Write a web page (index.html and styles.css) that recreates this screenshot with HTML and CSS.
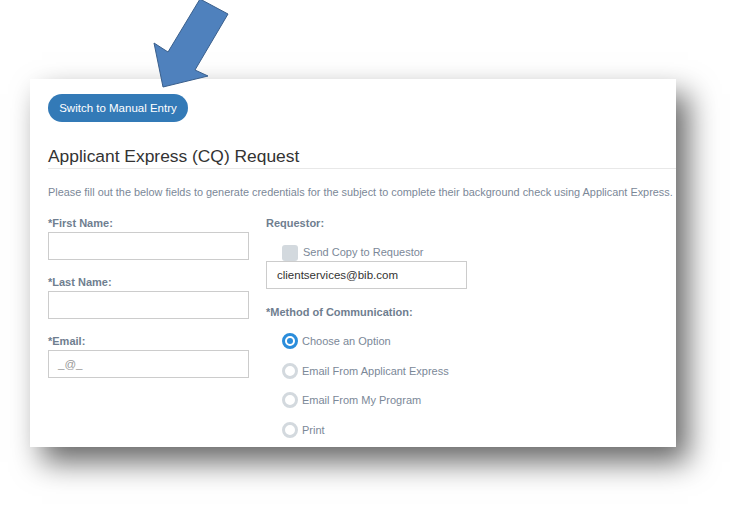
FILE: index.html
```html
<!DOCTYPE html>
<html>
<head>
<meta charset="utf-8">
<link rel="stylesheet" href="styles.css">
</head>
<body>
<div class="stage">
  <div class="panel">
    <button class="btn-manual">Switch to Manual Entry</button>
    <h1 class="title">Applicant Express (CQ) Request</h1>
    <p class="desc">Please fill out the below fields to generate credentials for the subject to complete their background check using Applicant Express.</p>
    <div class="cols">
      <div class="col col-left">
        <div class="label">*First Name:</div>
        <div class="input"></div>
        <div class="label gap">*Last Name:</div>
        <div class="input"></div>
        <div class="label gap">*Email:</div>
        <div class="input"><span class="placeholder">_@_</span></div>
      </div>
      <div class="col col-right">
        <div class="label">Requestor:</div>
        <div class="check-row"><span class="checkbox"></span><span class="opt-text">Send Copy to Requestor</span></div>
        <div class="input"><span class="value">clientservices@bib.com</span></div>
        <div class="label method">*Method of Communication:</div>
        <div class="radios">
          <div class="radio-row"><span class="radio on"></span><span class="opt-text">Choose an Option</span></div>
          <div class="radio-row"><span class="radio"></span><span class="opt-text">Email From Applicant Express</span></div>
          <div class="radio-row"><span class="radio"></span><span class="opt-text">Email From My Program</span></div>
          <div class="radio-row"><span class="radio"></span><span class="opt-text">Print</span></div>
        </div>
      </div>
    </div>
  </div>
</div>
<svg class="arrow" width="737" height="100" viewBox="0 0 737 100">
  <polygon points="200,-1 228,14 195,70 208,76 163,87 154,43 168,52" fill="#4f81bd" stroke="#3a5f8c" stroke-width="1"/>
</svg>
</body>
</html>
```

FILE: styles.css
```css
html, body {
  margin: 0;
  padding: 0;
  background: #ffffff;
  width: 737px;
  height: 517px;
  overflow: hidden;
  font-family: "Liberation Sans", Arial, sans-serif;
}
.stage {
  padding: 79px 0 0 30px;
}
.panel {
  width: 628px;
  height: 353px;
  padding: 15px 0 0 18px;
  background: #ffffff;
  box-shadow: 12px 15px 28px rgba(0, 0, 0, 0.6);
}
.btn-manual {
  display: block;
  height: 28px;
  padding: 0 11px;
  border: none;
  border-radius: 14px;
  background: #337ab7;
  color: #ffffff;
  font-family: "Liberation Sans", Arial, sans-serif;
  font-size: 11.5px;
  line-height: 28px;
  width: 140px;
  text-align: center;
}
.title {
  margin: 24px 0 0 0;
  font-weight: normal;
  font-size: 17.4px;
  line-height: 20px;
  color: #333333;
  padding-bottom: 2px;
  border-bottom: 1px solid #e8e8e8;
}
.desc {
  margin: 16px 0 0 0;
  font-size: 10.9px;
  line-height: 14px;
  color: #7b8898;
  white-space: nowrap;
}
.cols {
  display: flex;
  gap: 17px;
  margin-top: 17px;
}
.col {
  width: 201px;
  display: flex;
  flex-direction: column;
}
.label {
  font-size: 11px;
  font-weight: bold;
  line-height: 14px;
  color: #6f7e8f;
  white-space: nowrap;
  margin-bottom: 2px;
}
.label.gap {
  margin-top: 15px;
}
.input {
  box-sizing: border-box;
  height: 28px;
  border: 1px solid #cccccc;
  background: #ffffff;
  display: flex;
  align-items: center;
  padding-left: 9px;
  font-size: 11.5px;
}
.placeholder {
  color: #999999;
}
.value {
  color: #333333;
  padding-left: 1px;
}
.check-row {
  display: flex;
  align-items: center;
  height: 16px;
  margin-top: 13px;
  padding-left: 16px;
  gap: 5px;
}
.checkbox {
  width: 16px;
  height: 16px;
  border-radius: 3px;
  background: #d3d9de;
  flex: none;
}
.check-row .opt-text {
  position: relative;
  top: -1px;
}
.opt-text {
  font-size: 11px;
  color: #7b8898;
  white-space: nowrap;
  line-height: 14px;
}
.label.method {
  margin-top: 16px;
}
.radios {
  display: flex;
  flex-direction: column;
  gap: 13.5px;
  margin-top: 12px;
}
.radio-row {
  display: flex;
  align-items: center;
  height: 16px;
  padding-left: 16px;
  gap: 4px;
}
.radio {
  box-sizing: border-box;
  width: 16px;
  height: 16px;
  border-radius: 50%;
  border: 3px solid #d3d9de;
  background: #ffffff;
  flex: none;
  display: flex;
  align-items: center;
  justify-content: center;
}
.radio.on {
  border-color: #2b8ddb;
}
.radio.on::after {
  content: "";
  width: 6px;
  height: 6px;
  border-radius: 50%;
  background: #2b8ddb;
}
.arrow {
  position: absolute;
  left: 0;
  top: 0;
}
```
